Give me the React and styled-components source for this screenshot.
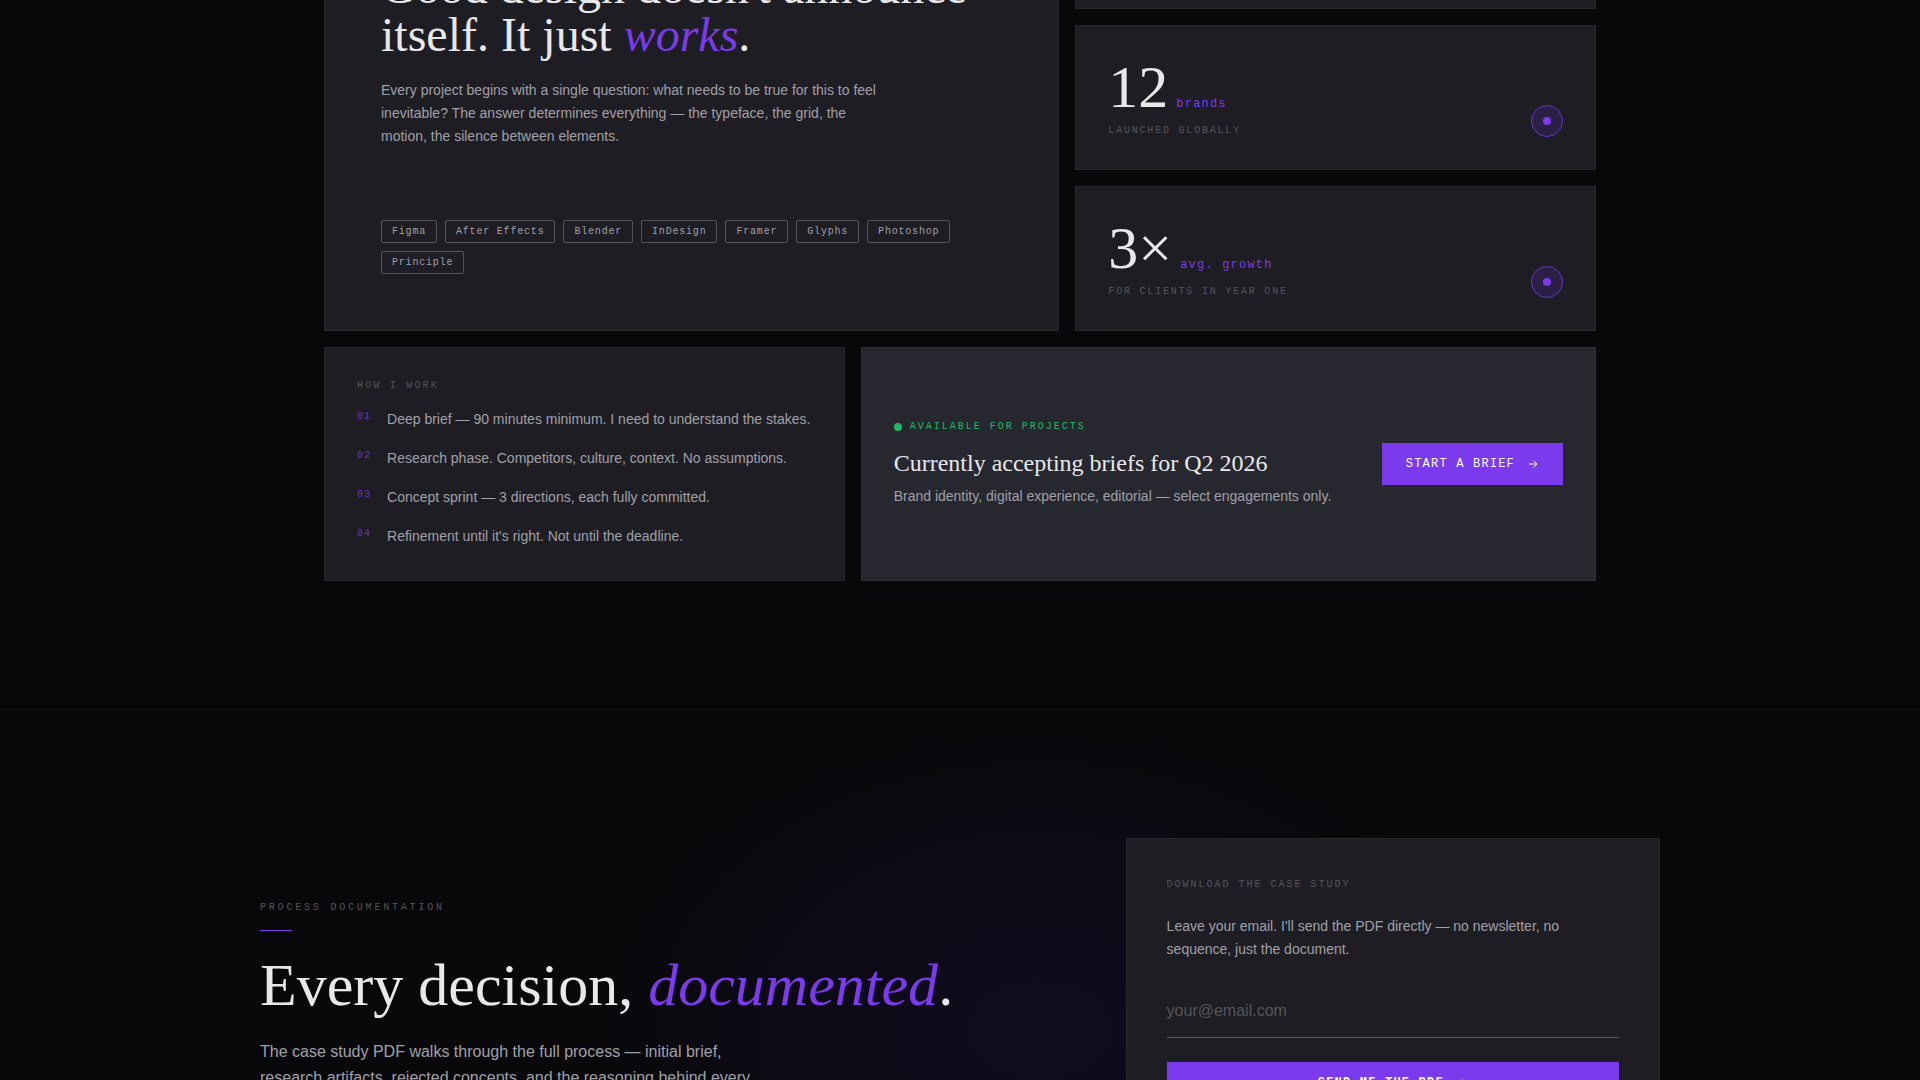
import React, { useState } from "react";
import styled, { createGlobalStyle } from "styled-components";

const serif = `"Liberation Serif", serif`;
const sans = `"Liberation Sans", sans-serif`;
const mono = `"Liberation Mono", monospace`;

const GlobalStyle = createGlobalStyle`
  * {
    box-sizing: border-box;
    margin: 0;
    padding: 0;
  }
  body {
    background: #08080a;
    color: #e8e8ea;
    font-family: ${sans};
    overflow: hidden;
  }
`;

const Page = styled.main`
  height: 100vh;
  overflow: hidden;
`;

const About = styled.section`
  max-width: 1400px;
  margin: -136px auto 0;
  padding: 0 64px 128px;
`;

const Bento = styled.div`
  display: grid;
  grid-template-columns: repeat(12, 1fr);
  grid-template-rows: repeat(3, 145px) auto;
  gap: 16px;
`;

const Card = styled.div`
  background: ${(props) => (props.$raised ? "#27272f" : "#1e1d23")};
  border: 1px solid ${(props) => (props.$raised ? "#303034" : "#29292d")};
  grid-column: span ${(props) => props.$cols};
  padding: 32px;
`;

const MainCard = styled(Card)`
  grid-row: span 3;
  display: flex;
  flex-direction: column;
  justify-content: flex-end;
  padding: 56px;
`;

const Title = styled.h2`
  font-family: ${serif};
  font-weight: normal;
  font-size: 48px;
  line-height: 48px;

  em {
    color: #7c3aed;
  }
`;

const BigTitle = styled(Title)`
  font-size: 60px;
  line-height: 60px;
  margin-bottom: 24px;
`;

const Text = styled.p`
  color: #a0a0a8;
  font-size: 14px;
  line-height: 23px;
`;

const Intro = styled(Text)`
  max-width: 500px;
  margin: 20px 0 72px;
`;

const Tags = styled.ul`
  display: flex;
  flex-wrap: wrap;
  gap: 8px;
  list-style: none;
`;

const Tag = styled.li`
  border: 1px solid #55555c;
  border-radius: 2px;
  color: #a0a0a8;
  font-family: ${mono};
  font-size: 10px;
  line-height: 11px;
  letter-spacing: 0.08em;
  padding: 5px 10px;
`;

const StatCard = styled(Card)`
  display: flex;
  justify-content: space-between;
  align-items: flex-end;
`;

const StatValue = styled.div`
  display: flex;
  align-items: baseline;
  gap: 8px;
  font-family: ${serif};
  font-size: 60px;
  line-height: 60px;
  margin-bottom: 8px;
`;

const Unit = styled.span`
  color: #7c3aed;
  font-family: ${mono};
  font-size: 12px;
  line-height: 12px;
  letter-spacing: 0.1em;
`;

const Label = styled.p`
  color: #55555c;
  font-family: ${mono};
  font-size: 10px;
  line-height: 12px;
  letter-spacing: ${(props) => props.$spacing || "0.2em"};
  text-transform: uppercase;
`;

const Ring = styled.span`
  display: flex;
  align-items: center;
  justify-content: center;
  width: 32px;
  height: 32px;
  border: 1px solid #6634c4;
  border-radius: 50%;
  background: #2c1f45;

  &::after {
    content: "";
    width: 8px;
    height: 8px;
    border-radius: 50%;
    background: #7c3aed;
  }
`;

const Steps = styled.ol`
  display: flex;
  flex-direction: column;
  gap: 16px;
  list-style: none;
  margin-top: 16px;
`;

const Step = styled.li`
  display: flex;
  gap: 16px;
`;

const StepNumber = styled.span`
  color: #7c3aed;
  opacity: 0.8;
  font-family: ${mono};
  font-size: 10px;
  line-height: 17px;
  letter-spacing: 0.1em;
`;

const CtaCard = styled(Card)`
  display: flex;
  align-items: center;
  justify-content: space-between;
`;

const Status = styled(Label)`
  display: flex;
  align-items: center;
  gap: 8px;
  color: #25b862;

  &::before {
    content: "";
    width: 8px;
    height: 8px;
    border-radius: 50%;
    background: #25b862;
  }
`;

const CtaTitle = styled.h3`
  font-family: ${serif};
  font-weight: normal;
  font-size: 24px;
  line-height: 28px;
  margin: 16px 0 8px;
`;

const Button = styled.button`
  display: flex;
  align-items: center;
  justify-content: center;
  gap: 12px;
  width: ${(props) => (props.$wide ? "100%" : "auto")};
  border: none;
  background: #7c3aed;
  color: #fff;
  font-family: ${mono};
  font-size: 12px;
  line-height: 14px;
  font-weight: ${(props) => (props.$wide ? "bold" : "normal")};
  letter-spacing: 0.1em;
  text-transform: uppercase;
  padding: 14px 24px;
  cursor: pointer;
`;

const CaseStudy = styled.section`
  border-top: 1px solid #141417;
  padding: 128px 64px;
  background: radial-gradient(
    460px 320px at 1040px 320px,
    #110c20,
    transparent
  );
`;

const CaseGrid = styled.div`
  display: grid;
  grid-template-columns: 3fr 2fr;
  gap: 64px;
  max-width: 1400px;
  margin: 0 auto;
`;

const CaseText = styled.div`
  padding-top: 64px;
`;

const Rule = styled.hr`
  width: 32px;
  border: none;
  border-top: 1px solid #7c3aed;
  margin: 16px 0 24px;
`;

const Lead = styled(Text)`
  font-size: 16px;
  line-height: 26px;
  max-width: 520px;
`;

const FormCard = styled.form`
  background: #1e1d23;
  border: 1px solid #29292d;
  padding: 40px;
`;

const FormText = styled(Text)`
  margin: 24px 0;
`;

const Email = styled.input`
  display: block;
  width: 100%;
  border: none;
  border-bottom: 1px solid #55555c;
  background: transparent;
  color: #e8e8ea;
  font-family: ${sans};
  font-size: 16px;
  line-height: 20px;
  padding: 16px 0;
  margin-bottom: 24px;
  outline: none;

  &::placeholder {
    color: #55555c;
  }
`;

const tools = [
  "Figma",
  "After Effects",
  "Blender",
  "InDesign",
  "Framer",
  "Glyphs",
  "Photoshop",
  "Principle",
];

const stats = [
  { value: "8", unit: "years", label: "Of practice" },
  { value: "12", unit: "brands", label: "Launched globally" },
  { value: "3×", unit: "avg. growth", label: "For clients in year one" },
];

const steps = [
  "Deep brief — 90 minutes minimum. I need to understand the stakes.",
  "Research phase. Competitors, culture, context. No assumptions.",
  "Concept sprint — 3 directions, each fully committed.",
  "Refinement until it's right. Not until the deadline.",
];

const Arrow = () => (
  <svg width="12" height="12" viewBox="0 0 12 12" fill="none" aria-hidden="true">
    <path d="M2 6h8M6.5 2.5L10 6l-3.5 3.5" stroke="currentColor" />
  </svg>
);

const App = () => {
  const [email, setEmail] = useState("");

  function handleEmail(e) {
    setEmail(e.target.value);
  }

  function handleSubmit(e) {
    e.preventDefault();
  }

  return (
    <Page>
      <GlobalStyle />
      <About>
        <Bento>
          <MainCard $cols={7}>
            <Title>
              Good design doesn't announce itself. It just <em>works</em>.
            </Title>
            <Intro>
              Every project begins with a single question: what needs to be true
              for this to feel inevitable? The answer determines everything —
              the typeface, the grid, the motion, the silence between elements.
            </Intro>
            <Tags>
              {tools.map((tool) => (
                <Tag key={tool}>{tool}</Tag>
              ))}
            </Tags>
          </MainCard>
          {stats.map((stat) => (
            <StatCard $cols={5} key={stat.label}>
              <div>
                <StatValue>
                  {stat.value}
                  <Unit>{stat.unit}</Unit>
                </StatValue>
                <Label $spacing="0.18em">{stat.label}</Label>
              </div>
              <Ring />
            </StatCard>
          ))}
          <Card $cols={5}>
            <Label $spacing="0.22em">How I work</Label>
            <Steps>
              {steps.map((step, i) => (
                <Step key={step}>
                  <StepNumber>0{i + 1}</StepNumber>
                  <Text as="span">{step}</Text>
                </Step>
              ))}
            </Steps>
          </Card>
          <CtaCard $cols={7} $raised>
            <div>
              <Status>Available for projects</Status>
              <CtaTitle>Currently accepting briefs for Q2 2026</CtaTitle>
              <Text>
                Brand identity, digital experience, editorial — select
                engagements only.
              </Text>
            </div>
            <Button type="button">
              Start a brief
              <Arrow />
            </Button>
          </CtaCard>
        </Bento>
      </About>
      <CaseStudy>
        <CaseGrid>
          <CaseText>
            <Label $spacing="0.28em">Process documentation</Label>
            <Rule />
            <BigTitle>
              Every decision, <em>documented</em>.
            </BigTitle>
            <Lead>
              The case study PDF walks through the full process — initial brief,
              research artifacts, rejected concepts, and the reasoning behind
              every final choice.
            </Lead>
          </CaseText>
          <FormCard onSubmit={handleSubmit}>
            <Label>Download the case study</Label>
            <FormText>
              Leave your email. I'll send the PDF directly — no newsletter, no
              sequence, just the document.
            </FormText>
            <Email
              type="email"
              aria-label="Email"
              placeholder="your@email.com"
              value={email}
              onChange={handleEmail}
              required
            />
            <Button type="submit" $wide>
              Send me the PDF
              <Arrow />
            </Button>
          </FormCard>
        </CaseGrid>
      </CaseStudy>
    </Page>
  );
};

export default App;
